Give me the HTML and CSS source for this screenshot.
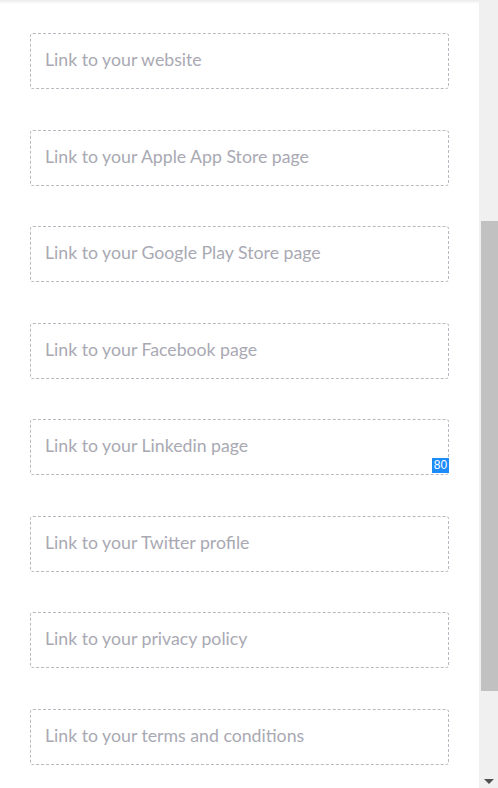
FILE: index.html
```html
<!DOCTYPE html>
<html>
<head>
<meta charset="utf-8">
<link rel="stylesheet" href="styles.css">
</head>
<body>
<div class="page">
  <div class="main">
    <div class="topshade"></div>
    <div class="form">
      <div class="field"><input class="input" placeholder="Link to your website"></div>
      <div class="field"><input class="input" placeholder="Link to your Apple App Store page"></div>
      <div class="field"><input class="input" placeholder="Link to your Google Play Store page"></div>
      <div class="field"><input class="input" placeholder="Link to your Facebook page"></div>
      <div class="field"><input class="input" placeholder="Link to your Linkedin page"><span class="badge">80</span></div>
      <div class="field"><input class="input" placeholder="Link to your Twitter profile"></div>
      <div class="field"><input class="input" placeholder="Link to your privacy policy"></div>
      <div class="field"><input class="input" placeholder="Link to your terms and conditions"></div>
    </div>
  </div>
  <div class="scrollbar">
    <div class="thumb"></div>
    <div class="arrow"></div>
  </div>
</div>
</body>
</html>
```

FILE: styles.css
```css
html, body {
  margin: 0;
  padding: 0;
  background: #ffffff;
}
body {
  font-family: Lato, "Open Sans", sans-serif;
  width: 498px;
  height: 788px;
  overflow: hidden;
}
.page {
  display: flex;
  height: 788px;
}
.main {
  flex: 1;
  display: flex;
  flex-direction: column;
}
.topshade {
  height: 4px;
  background: linear-gradient(#ececec, #ffffff);
}
.form {
  padding: 29px 30px 0 30px;
  display: flex;
  flex-direction: column;
  gap: 40.5px;
}
.field {
  position: relative;
  height: 56px;
}
.input {
  box-sizing: border-box;
  width: 100%;
  height: 100%;
  margin: 0;
  border: 1px dashed #b9b9c1;
  border-radius: 3px;
  padding: 0 14px 3px 14px;
  font-family: Lato, "Open Sans", sans-serif;
  font-size: 17.7px;
  color: #333;
  background: #fff;
  outline: none;
}
.input::placeholder {
  color: #a9a9b3;
  opacity: 1;
}
.badge {
  position: absolute;
  right: 0;
  bottom: 2px;
  width: 17px;
  height: 15px;
  background: #1e8cf8;
  color: #fff;
  font-family: "Liberation Sans", Arial, sans-serif;
  font-weight: normal;
  font-size: 12px;
  line-height: 15px;
  text-align: center;
}
.scrollbar {
  width: 19px;
  background: #f0f0f0;
  display: flex;
  flex-direction: column;
  align-items: flex-end;
}
.thumb {
  margin-top: 221px;
  width: 17px;
  height: 470px;
  background: #c1c1c1;
}
.arrow {
  margin-top: auto;
  margin-bottom: 4px;
  margin-right: 4px;
  width: 0;
  height: 0;
  border-left: 5px solid transparent;
  border-right: 5px solid transparent;
  border-top: 5px solid #505050;
}
```
